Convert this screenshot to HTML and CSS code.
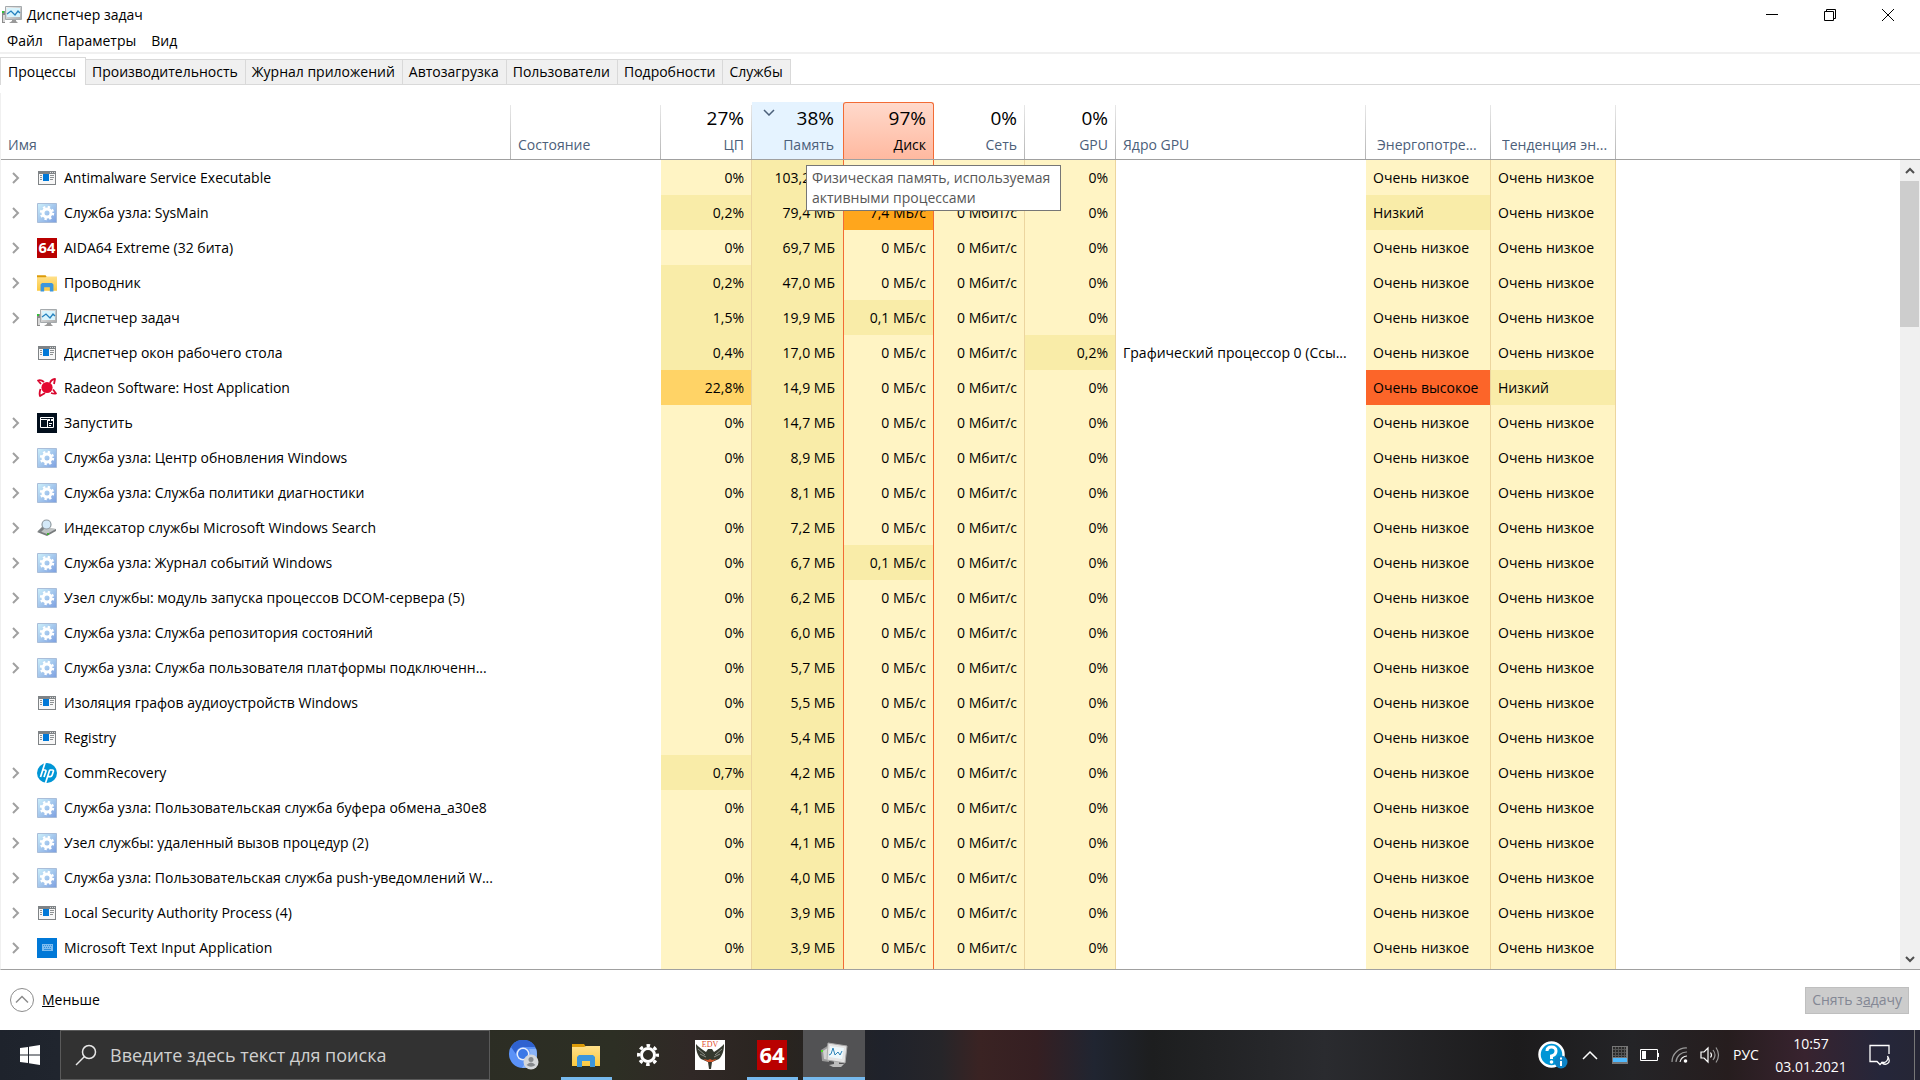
FILE: index.html
```html
<!DOCTYPE html>
<html lang="ru">
<head>
<meta charset="utf-8">
<title>Диспетчер задач</title>
<link rel="stylesheet" href="styles.css">
</head>
<body>
<svg class="sprite" aria-hidden="true">
  <defs>
    <linearGradient id="svc-bg" x1="0" y1="0" x2="1" y2="1"><stop offset="0" stop-color="#cdf0fb"/><stop offset="1" stop-color="#7c9fe0"/></linearGradient>
    <linearGradient id="folder-bg" x1="0" y1="0" x2="0" y2="1"><stop offset="0" stop-color="#ffe08a"/><stop offset="1" stop-color="#fbc93f"/></linearGradient>
    <linearGradient id="screen-frame" x1="0" y1="0" x2="1" y2="1"><stop offset="0" stop-color="#f4f4f4"/><stop offset="1" stop-color="#a9a9a9"/></linearGradient>
  </defs>
  <symbol id="i-window" viewBox="0 0 20 20"><path fill="#7f8386" d="M1 3h18v14H1z"/><path fill="#f7f7f7" d="M2 6h16v10H2z"/><path fill="#0078d7" d="M6 6h6v7H6z"/><path stroke="#8d9193" d="M3 7.500h2M3 9.500h2M3 11.500h2M13 7.500h4M13 9.500h4M13 11.500h3"/><path fill="#d8dadb" d="M13 4h1v1h-1zM15 4h1v1h-1zM17 4h1v1h-1z"/></symbol>
  <symbol id="i-service" viewBox="0 0 20 20"><path fill="url(#svc-bg)" stroke="#a9bdd9" d="M.5.5h19v19H.5z"/><circle cx="10" cy="10" r="4" fill="none" stroke="#fff" stroke-width="3"/><circle cx="10" cy="10" r="6" fill="none" stroke="#fff" stroke-width="2.400" stroke-dasharray="2.300 2.412"/></symbol>
  <symbol id="i-aida" viewBox="0 0 30 30"><path fill="#b90000" d="M0 0h30v30H0z"/><text x="15" y="22.500" text-anchor="middle" class="aida-text">64</text></symbol>
  <symbol id="i-folder" viewBox="0 0 28 24"><path fill="#dc9b08" d="M0 1h12l2 3v5H0z"/><path fill="url(#folder-bg)" d="M0 4h12l2-1h14v20H0z"/><path fill="#3c96dc" d="M5 24V14l2-2h14l2 2v10h-5v-6h-8v6z"/></symbol>
  <symbol id="i-taskmgr" viewBox="0 0 20 18"><path fill="#8b8b8b" d="M0 5h3v12H0z"/><path fill="#d8d8d8" d="M1 9h2v7H1z"/><path fill="#35c23a" d="M0 5h2v2H0z"/><path fill="#999" d="M10 13h4v2l2 2H7l3-2z"/><path fill="url(#screen-frame)" stroke="#a5aaad" d="M3.500.5h16v13h-16z"/><path fill="#d9f4fd" d="M5 2h13v9H5z"/><path fill="none" stroke="#2581be" stroke-width="1.300" d="M5 8l4-3 4 4 3-4 2 2"/></symbol>
  <symbol id="i-radeon" viewBox="0 0 20 20"><circle cx="10" cy="9.500" r="5.600" fill="#e40830"/><path fill="none" stroke="#d9062d" stroke-width="1.800" stroke-linejoin="round" d="M7 4Q4 1.500 1 2.500L4 6M13 5q1-3.500 5-4l-1 5M14 15q3 1 5 .5l-3-4M8 15l-5 3q-1-3 .5-7"/></symbol>
  <symbol id="i-run" viewBox="0 0 20 20"><path fill="#020f1d" d="M0 0h20v20H0z"/><path fill="none" stroke="#fff" d="M3.500 4.500h13v10h-13zM4 6.500h6.500v8"/><path fill="#fff" d="M11 6h2v2h-2zM14 6h2v2h-2zM12 10h3v1h-3zM12 12h2v1h-2z"/></symbol>
  <symbol id="i-indexer" viewBox="0 0 20 20"><path fill="#777b7c" d="M0 14l6-4 13 1v2l-9 5z"/><path fill="#bfc3c4" d="M2 13l6-4 11 2-9 5z"/><path fill="#3fae35" d="M10 15h2v2h-2z"/><path stroke="#7d8284" stroke-width="3" d="M7 9l-5 5"/><circle cx="9.500" cy="6.500" r="4.500" fill="#d4e9f8" stroke="#8f999f" stroke-width="1.200"/></symbol>
  <symbol id="i-hp" viewBox="0 0 20 20"><circle cx="10" cy="10" r="10" fill="#0096d6"/><path fill="none" stroke="#fff" stroke-width="1.700" d="M8 0L3.500 14M5.500 7h2.300q1.600 0 1 1.700L7 14M12.800 6.800L8.500 20M12.800 7h2.500q1.500 0 1 1.600l-1.200 3.600q-.5 1.400-2 1.400h-2"/></symbol>
  <symbol id="i-input" viewBox="0 0 20 20"><path fill="#0078d7" d="M0 0h20v20H0z"/><path fill="#7dbdf0" d="M5 6h11v7H5z"/><path stroke="#2f8fdd" stroke-dasharray="1 1" d="M6 7.500h9M7 9.500h8"/><path stroke="#2f8fdd" d="M7 11.500h7"/></symbol>
  <symbol id="i-chevron" viewBox="0 0 8 12"><path fill="none" stroke="#a0a0a0" stroke-width="2" d="M1 1l5 5-5 5"/></symbol>
</svg>

<main class="window">
  <header class="titlebar">
    <svg class="title-icon"><use href="#i-taskmgr"/></svg>
    <h1 class="title">Диспетчер задач</h1>
    <div class="controls">
      <button class="control" aria-label="Свернуть"><svg width="12" height="12"><path stroke="#000" d="M0 5.500h12"/></svg></button>
      <button class="control" aria-label="Восстановить"><svg width="12" height="12"><path fill="none" stroke="#000" d="M.5 2.500h9v9h-9zM2.500 2V.5h9v9H10"/></svg></button>
      <button class="control" aria-label="Закрыть"><svg width="12" height="12"><path stroke="#000" d="M0 0l12 12M12 0L0 12"/></svg></button>
    </div>
  </header>
  <nav class="menubar"><button>Файл</button><button>Параметры</button><button>Вид</button></nav>
  <div class="tabs" role="tablist">
    <button class="tab active" role="tab" aria-selected="true">Процессы</button><button class="tab" role="tab">Производительность</button><button class="tab" role="tab">Журнал приложений</button><button class="tab" role="tab">Автозагрузка</button><button class="tab" role="tab">Пользователи</button><button class="tab" role="tab">Подробности</button><button class="tab" role="tab">Службы</button>
  </div>

  <section class="panel">
    <div class="table-area">
      <table class="processes">
        <colgroup><col class="c-name"><col class="c-status"><col class="c-cpu"><col class="c-mem"><col class="c-disk"><col class="c-net"><col class="c-gpu"><col class="c-engine"><col class="c-power"><col class="c-power"><col></colgroup>
        <thead>
          <tr>
            <th><div class="head">Имя</div></th>
            <th><div class="head">Состояние</div></th>
            <th class="num"><div class="head"><span class="total">27%</span>ЦП</div></th>
            <th class="num"><div class="head sorted"><span class="total"><svg class="sort" width="12" height="7"><path fill="none" stroke="#4c607a" stroke-width="1.500" d="M1 1l5 5 5-5"/></svg>38%</span>Память</div></th>
            <th class="num"><div class="head hot"><span class="total">97%</span>Диск</div></th>
            <th class="num"><div class="head"><span class="total">0%</span>Сеть</div></th>
            <th class="num"><div class="head"><span class="total">0%</span>GPU</div></th>
            <th><div class="head">Ядро GPU</div></th>
            <th><div class="head inset"><span class="clip">Энергопотре...</span></div></th>
            <th><div class="head inset"><span class="clip">Тенденция эн...</span></div></th>
            <td class="rest"></td>
          </tr>
        </thead>
        <tbody id="rows"></tbody>
      </table>
      <div class="tooltip" role="tooltip">Физическая память, используемая активными процессами</div>
    </div>
    <div class="scroll-area">
      <div class="scroll-head"></div>
      <div class="scrollbar">
        <button class="scroll-btn" aria-label="Вверх"><svg width="10" height="8"><path fill="none" stroke="#505050" stroke-width="2" d="M1 6l4-4 4 4"/></svg></button>
        <div class="thumb"></div>
        <button class="scroll-btn last" aria-label="Вниз"><svg width="10" height="8"><path fill="none" stroke="#505050" stroke-width="2" d="M1 2l4 4 4-4"/></svg></button>
      </div>
    </div>
  </section>

  <footer class="footer">
    <button class="less"><svg width="24" height="24"><circle cx="12" cy="12" r="11.500" fill="none" stroke="#8c8c8c"/><path fill="none" stroke="#8c8c8c" stroke-width="1.500" d="M6 14.500l6-6 6 6"/></svg><span><u>М</u>еньше</span></button>
    <button class="end-task" disabled>Снять з<u>а</u>дачу</button>
  </footer>
</main>

<div class="taskbar">
  <button class="start" aria-label="Пуск"><svg width="20" height="20"><path fill="#fff" d="M0 3l8-1v7.500H0zM9 1.800L20 0v9.500H9zM0 10.500h8V18l-8-1zM9 10.500h11V20L9 18.200z"/></svg></button>
  <label class="search"><svg width="22" height="22"><circle cx="14" cy="8" r="6.500" fill="none" stroke="#e8e8e8" stroke-width="1.500"/><path stroke="#e8e8e8" stroke-width="1.500" d="M9.500 12.500L1 21"/></svg><input type="text" placeholder="Введите здесь текст для поиска" aria-label="Поиск"></label>
  <div class="apps">
    <button class="app" aria-label="Chromium"><svg width="30" height="30"><circle cx="14" cy="14" r="14" fill="#5b92f7"/><path fill="#2f62d0" d="M2 7a14 14 0 0 1 24.500 0H14a7 7 0 0 0-7 7z"/><path fill="#8ab4f8" d="M27 9a14 14 0 0 1-14 19l6-10a7 7 0 0 0 1-9z"/><circle cx="14" cy="14" r="6.500" fill="#e8effd"/><circle cx="14" cy="14" r="5" fill="#3b78e7"/><circle cx="22" cy="22" r="7.500" fill="#d5d8db"/><circle cx="22" cy="19.500" r="2.500" fill="#85898d"/><path fill="#85898d" d="M17.500 25q4.500-5 9 0-4.500 3.500-9 0z"/></svg></button>
    <button class="app open" aria-label="Проводник"><svg width="28" height="24"><use href="#i-folder"/></svg></button>
    <button class="app" aria-label="Параметры"><svg width="24" height="24"><circle cx="12" cy="12" r="6.500" fill="none" stroke="#fff" stroke-width="3"/><circle cx="12" cy="12" r="9.500" fill="none" stroke="#fff" stroke-width="3" stroke-dasharray="3.600 3.861" stroke-dashoffset="1.800"/></svg></button>
    <button class="app" aria-label="EDV"><svg width="30" height="30"><path fill="#fff" d="M0 0h30v30H0z"/><text x="15" y="7" text-anchor="middle" class="edv-text">EDV</text><path fill="#35392f" d="M1 4c2 3 6 5 10 8l2-3h4l2 3c4-3 8-5 10-8 0 6-1 11-5 15l-7 3-1 7h-2l-1-7-7-3C2 15 1 10 1 4z"/><path stroke="#c9cbc5" stroke-width=".6" d="M3 9l7 6M5 14l6 3M27 9l-7 6M25 14l-6 3"/><path fill="#d4572d" d="M8 19l5 1 2-1 2 1 5-1-5 3h-4z"/></svg></button>
    <button class="app open" aria-label="AIDA64"><svg width="30" height="30"><use href="#i-aida"/></svg></button>
    <button class="app open current" aria-label="Диспетчер задач"><svg width="28" height="26"><path fill="#999" d="M1 8l8-5v17l-7-1z"/><path fill="#d2d2d2" d="M3 9l6-4v13l-5-1z"/><path fill="#54d72b" d="M1 8h2v2H1z"/><path fill="#bcbcbc" d="M14 18h5v4h5l-3 3h-8l-4-2 5-1z"/><path fill="#e3e3e3" stroke="#aaa" d="M8 1l19 3-2 17-18-3z"/><path fill="#edf8fc" d="M10 4l14 2-2 11-13-2z"/><path fill="none" stroke="#2c83b8" d="M9 13l2-1 2-6 2 7 3-3 2 3 2-4"/></svg></button>
  </div>
  <div class="tray">
    <button class="tray-help" aria-label="Справка"><svg width="30" height="28"><circle cx="13.500" cy="13.500" r="12" fill="#0096d6" stroke="#fff" stroke-width="2.500"/><path fill="none" stroke="#fff" stroke-width="3" d="M9 10q0-4 4.500-4t4.500 4-4.500 5v3"/><circle cx="13.500" cy="21" r="1.800" fill="#fff"/><circle cx="23" cy="21" r="6.500" fill="#0c83c6"/><path fill="#fff" d="M22 20h2v5h-2zM22 16.500h2v2h-2z"/></svg></button>
    <button class="tray-icon" aria-label="Скрытые значки"><svg width="16" height="10"><path fill="none" stroke="#fff" stroke-width="1.500" d="M1 9l7-7 7 7"/></svg></button>
    <button class="tray-icon" aria-label="Монитор"><svg width="16" height="18"><path fill="#777" d="M0 0h16v18H0z"/><path fill="#292929" d="M1 1h13v10H1z"/><path stroke="#555" d="M3.500 1v10M6.500 1v10M9.500 1v10M12.500 1v10M1 3.500h13M1 6.500h13M1 9.500h13"/><path fill="#4fbaff" d="M1 12h14v4H1z"/></svg></button>
    <button class="tray-icon" aria-label="Батарея"><svg width="20" height="12"><path fill="none" stroke="#fff" d="M.5.5h17v11H.5z"/><path fill="#fff" d="M2 2h4v8H2zM18 4h1v4h-1z"/></svg></button>
    <button class="tray-icon" aria-label="Сеть"><svg width="18" height="18"><g fill="none" stroke="#9a9a9a" stroke-width="1.200"><path d="M1 16A14 14 0 0 1 16 2"/><path d="M5 16A10.500 10.500 0 0 1 16 6"/></g><path fill="none" stroke="#eee" stroke-width="1.200" d="M9 16A7 7 0 0 1 16 10"/><circle cx="14.500" cy="15" r="1.800" fill="#fff"/></svg></button>
    <button class="tray-icon" aria-label="Громкость"><svg width="20" height="18"><path fill="none" stroke="#fff" stroke-width="1.200" d="M1 6h3l4-4v14l-4-4H1zM10.500 6.500q2 2.500 0 5"/><path fill="none" stroke="#999" stroke-width="1.200" d="M13 4q4 5 0 10M16 1.500q5 7.500 0 15"/></svg></button>
    <button class="lang">РУС</button>
    <button class="clock"><time>10:57</time><time>03.01.2021</time></button>
    <button class="notify" aria-label="Уведомления"><svg width="22" height="22"><path fill="none" stroke="#fff" stroke-width="1.300" d="M20 10V1.500H1v16h7l3 3 2-2"/><path fill="none" stroke="#fff" stroke-width="1.300" d="M18.500 12a4.500 4.500 0 0 1-6 6q2.500 3.500 6 1.500t0-7.500z"/></svg></button>
    <span class="desktop-edge"></span>
  </div>
</div>
<script src="app.js"></script>
</body>
</html>
```
FILE: styles.css
```css
* { box-sizing: border-box; }

body {
  margin: 0;
  height: 100vh;
  display: flex;
  flex-direction: column;
  overflow: hidden;
  background: #fff;
  color: #000;
  font: 14px/20px "Open Sans", "Noto Sans", sans-serif;
}

button {
  margin: 0;
  padding: 0;
  border: 0;
  background: none;
  color: inherit;
  font: inherit;
}

svg { display: block; flex: none; }
.sprite { position: absolute; width: 0; height: 0; }
.aida-text { font: bold 22px "Open Sans", sans-serif; fill: #fff; }
.edv-text { font: 8px "Liberation Serif", serif; fill: #e24a2c; }

.window { flex: 1; min-height: 0; display: flex; flex-direction: column; }

/* Title bar and menu */
.titlebar { display: flex; align-items: center; height: 30px; padding: 0 3px 0 2px; }
.title-icon { width: 20px; height: 18px; }
.title { flex: 1; margin: 0 0 0 5px; font-size: 14px; font-weight: 400; }
.controls { display: flex; }
.control { display: flex; align-items: center; justify-content: center; width: 58px; height: 28px; }
.menubar { display: flex; height: 24px; border-bottom: 2px solid #f0f0f0; }
.menubar button { padding: 0 8px 0 7px; line-height: 22px; }

/* Tabs */
.tabs { display: flex; align-items: flex-end; height: 31px; border-bottom: 1px solid #d9d9d9; }
.tab {
  height: 26px;
  margin-bottom: -1px;
  padding: 0 7px 0 6px;
  border: 1px solid #d9d9d9;
  border-left: 0;
  background: #f0f0f0;
}
.tab.active {
  height: 28px;
  padding: 0 9px 0 7px;
  border-left: 1px solid #d9d9d9;
  border-bottom: 0;
  background: #fff;
}

/* Process table */
.panel {
  flex: 1;
  min-height: 0;
  display: flex;
  margin-top: 8px;
  border-left: 1px solid #f0f0f0;
  border-bottom: 1px solid #a0a0a0;
  overflow: hidden;
}
.table-area { position: relative; flex: 1; min-width: 0; overflow: hidden; }
.processes { width: 100%; table-layout: fixed; border-spacing: 0; }
.c-name { width: 510px; }
.c-status { width: 150px; }
.c-cpu, .c-net, .c-gpu { width: 91px; }
.c-mem { width: 92px; }
.c-disk { width: 90px; }
.c-engine { width: 250px; }
.c-power { width: 125px; }

thead th {
  height: 67px;
  padding: 0;
  border-bottom: 1px solid #a0a0a0;
  background: linear-gradient(#e8e8e8, #b4b4b4) right bottom / 1px 54px no-repeat;
  vertical-align: bottom;
  text-align: left;
  font-weight: 400;
  color: #4c607a;
}
thead .rest { border-bottom: 1px solid #a0a0a0; }
.head {
  display: flex;
  flex-direction: column;
  justify-content: flex-end;
  height: 57px;
  padding: 0 8px 3px 7px;
  line-height: 22px;
}
.num { text-align: right; }
.num .head { text-align: right; }
.total {
  display: flex;
  justify-content: flex-end;
  margin-bottom: 2px;
  font-size: 19px;
  line-height: 28px;
  color: #000;
}
.sort { margin: 5px auto 0 4px; }
.inset { padding: 0 8px 3px 11px; }
.clip { overflow: hidden; text-overflow: ellipsis; white-space: nowrap; }
.sorted { padding-right: 10px; background: #e5f3ff; }
.hot {
  position: relative;
  margin-left: -1px;
  padding-right: 7px;
  border: 1px solid #f26b35;
  border-bottom: 0;
  border-radius: 3px 3px 0 0;
  background: linear-gradient(#ffd9cb, #ffb9a0);
  color: #000;
}

tbody td {
  height: 35px;
  padding: 0 7px;
  overflow: hidden;
  text-overflow: ellipsis;
  white-space: nowrap;
}
.heat { border-right: 1px solid #ecd59f; background: #fff4c4; }
.heat.low { background: #f9eca8; }
.heat.mid { background: #ffd366; }
.heat.high { background: #ffa61c; }
.heat.max { background: #fc6529; }
.heat.edge { border-right-color: #f26b35; }
.heat.memory { padding-right: 8px; }
.name-cell { display: flex; align-items: center; }
.expander { width: 20px; height: 20px; margin: 0 11px 0 -2px; display: flex; align-items: center; justify-content: center; }
.expander svg { width: 8px; height: 12px; }
.proc-icon { width: 20px; height: 20px; margin-right: 7px; }
.proc-name { width: 440px; overflow: hidden; text-overflow: ellipsis; }

.tooltip {
  position: absolute;
  left: 805px;
  top: 72px;
  width: 255px;
  padding: 2px 5px;
  border: 1px solid #767676;
  background: #fff;
  color: #575757;
}

/* Scroll bar */
.scroll-area { display: flex; flex-direction: column; width: 20px; }
.scroll-head { height: 67px; border-bottom: 1px solid #a0a0a0; }
.scrollbar { flex: 1; display: flex; flex-direction: column; background: #f0f0f0; }
.scroll-btn { display: flex; align-items: center; justify-content: center; height: 21px; }
.scroll-btn.last { margin-top: auto; }
.thumb { height: 18%; margin-right: 1px; background: #cdcdcd; }

/* Footer */
.footer { display: flex; align-items: center; justify-content: space-between; height: 60px; padding: 0 11px 0 10px; }
.less { display: flex; align-items: center; gap: 8px; }
.end-task { height: 27px; padding: 0 6px; border: 1px solid #bfbfbf; background: #ccc; color: #838794; }

/* Taskbar */
.taskbar {
  display: flex;
  height: 50px;
  background: linear-gradient(90deg, #1e232c 0, #20252e 3%, #2c2d24 25%, #2d2f24 32%, #302826 36%, #29241f 41%, #1f222b 46%, #262529 49%, #3a2323 51%, #351f22 54%, #202531 57%, #1d1e1f 60%, #2a2b2f 69%, #1c1b1c 79%, #242427 85%, #261d1e 90%, #38232f 94%, #25263a 98%, #262635 100%);
  color: #fff;
}
.start { display: flex; align-items: center; justify-content: center; width: 60px; }
.search { display: flex; align-items: center; gap: 13px; width: 430px; padding: 0 14px; border: 1px solid #5a5a5a; background: #323232; }
.search input { flex: 1; min-width: 0; padding: 0; border: 0; outline: 0; background: none; color: #fff; font: 18px/24px "Open Sans", "Noto Sans", sans-serif; }
.search input::placeholder { color: #d0d0d0; opacity: 1; }
.apps { display: flex; margin-left: 3px; }
.app { display: flex; align-items: center; justify-content: center; width: 62px; background: linear-gradient(#76b9ed, #76b9ed) center bottom / 0 3px no-repeat; }
.app.open { background-size: 51px 3px; }
.app.current { background-size: 100% 3px; background-color: #525254; }
.tray { display: flex; align-items: stretch; margin-left: auto; }
.tray button { display: flex; align-items: center; justify-content: center; }
.tray-help { width: 44px; }
.tray-icon { width: 30px; }
.lang { width: 42px; }
.tray .clock { flex-direction: column; width: 88px; line-height: 23px; }
.notify { width: 50px; }
.desktop-edge { width: 10px; border-right: 1px solid #777; margin-right: 5px; }
```
FILE: app.js
```js
const S = "Служба узла: ";
const LOW = "Очень низкое";

// icon, expandable, name, cpu, memory, then optional overrides
const processes = [
  ["window", 1, "Antimalware Service Executable", "0%", "103,2 МБ"],
  ["service", 1, S + "SysMain", "0,2%", "79,4 МБ", { disk: "7,4 МБ/с", diskHeat: "high", power: "Низкий", powerHeat: "low" }],
  ["aida", 1, "AIDA64 Extreme (32 бита)", "0%", "69,7 МБ"],
  ["folder", 1, "Проводник", "0,2%", "47,0 МБ"],
  ["taskmgr", 1, "Диспетчер задач", "1,5%", "19,9 МБ", { disk: "0,1 МБ/с", diskHeat: "low" }],
  ["window", 0, "Диспетчер окон рабочего стола", "0,4%", "17,0 МБ", { gpu: "0,2%", gpuHeat: "low", engine: "Графический процессор 0 (Ссы..." }],
  ["radeon", 0, "Radeon Software: Host Application", "22,8%", "14,9 МБ", { cpuHeat: "mid", power: "Очень высокое", powerHeat: "max", trend: "Низкий", trendHeat: "low" }],
  ["run", 1, "Запустить", "0%", "14,7 МБ"],
  ["service", 1, S + "Центр обновления Windows", "0%", "8,9 МБ"],
  ["service", 1, S + "Служба политики диагностики", "0%", "8,1 МБ"],
  ["indexer", 1, "Индексатор службы Microsoft Windows Search", "0%", "7,2 МБ"],
  ["service", 1, S + "Журнал событий Windows", "0%", "6,7 МБ", { disk: "0,1 МБ/с", diskHeat: "low" }],
  ["service", 1, "Узел службы: модуль запуска процессов DCOM-сервера (5)", "0%", "6,2 МБ"],
  ["service", 1, S + "Служба репозитория состояний", "0%", "6,0 МБ"],
  ["service", 1, S + "Служба пользователя платформы подключенн...", "0%", "5,7 МБ"],
  ["window", 0, "Изоляция графов аудиоустройств Windows", "0%", "5,5 МБ"],
  ["window", 0, "Registry", "0%", "5,4 МБ"],
  ["hp", 1, "CommRecovery", "0,7%", "4,2 МБ"],
  ["service", 1, S + "Пользовательская служба буфера обмена_a30e8", "0%", "4,1 МБ"],
  ["service", 1, "Узел службы: удаленный вызов процедур (2)", "0%", "4,1 МБ"],
  ["service", 1, S + "Пользовательская служба push-уведомлений W...", "0%", "4,0 МБ"],
  ["window", 1, "Local Security Authority Process (4)", "0%", "3,9 МБ"],
  ["input", 1, "Microsoft Text Input Application", "0%", "3,9 МБ"]
];

const heat = (text, level = "", extra = "") => `<td class="heat ${level} ${extra}">${text}</td>`;

const row = ([icon, expandable, name, cpu, memory, o = {}]) => `<tr>
  <td><div class="name-cell">
    <button class="expander" ${expandable ? 'aria-label="Развернуть"' : "disabled"}>${expandable ? '<svg><use href="#i-chevron"/></svg>' : ""}</button>
    <svg class="proc-icon"><use href="#i-${icon}"/></svg><span class="proc-name">${name}</span>
  </div></td>
  <td></td>
  ${heat(cpu, o.cpuHeat || (cpu === "0%" ? "" : "low"), "num")}
  ${heat(memory, "low", "num edge memory")}
  ${heat(o.disk || "0 МБ/с", o.diskHeat, "num edge")}
  ${heat("0 Мбит/с", "", "num")}
  ${heat(o.gpu || "0%", o.gpuHeat, "num")}
  <td>${o.engine || ""}</td>
  ${heat(o.power || LOW, o.powerHeat)}
  ${heat(o.trend || LOW, o.trendHeat)}
  <td></td>
</tr>`;

// The last row is blank and carries the column shading down to the frame.
const filler = `<tr aria-hidden="true"><td></td><td></td>${heat("")}${heat("", "low", "edge")}${heat("", "", "edge")}${heat("")}${heat("")}<td></td>${heat("")}${heat("")}<td></td></tr>`;

document.getElementById("rows").innerHTML = processes.map(row).join("") + filler;
```
